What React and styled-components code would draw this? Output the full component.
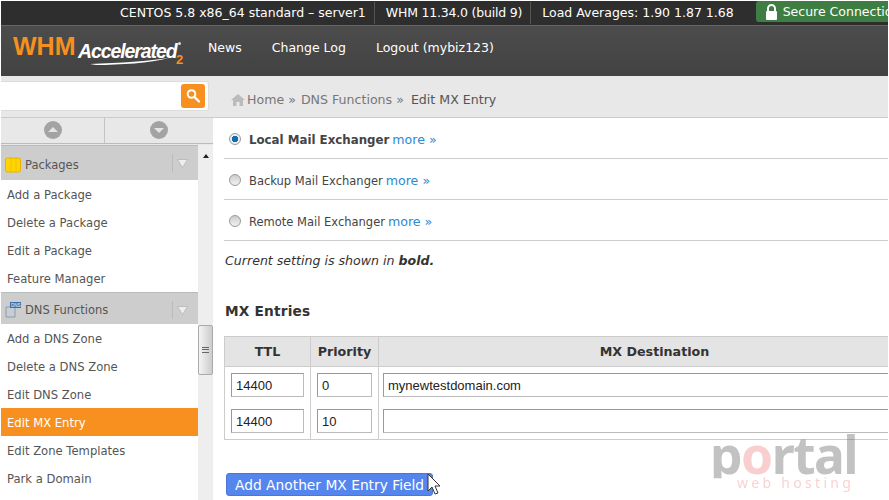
import React from 'react';
import styled, { createGlobalStyle } from 'styled-components';

const Global = createGlobalStyle`
  html, body { margin: 0; padding: 0; background: #fff; }
  * { box-sizing: border-box; }
`;
const Page = styled.div`
  position: relative; width: 889px; height: 500px; overflow: hidden; background: #fff;
  display: flex; flex-direction: column; padding: 1px 1px 0;
  font-family: "DejaVu Sans", Verdana, sans-serif; color: #333;
`;
const TopBar = styled.div`
  height: 25px; flex: none; background: #2e2e2e; border-bottom: 1px solid #666; overflow: hidden;
  display: flex; align-items: center; padding-left: 119px; color: #fff; font-size: 12.5px; white-space: nowrap;
`;
const TopItem = styled.span`
  padding-right: 8px; margin-right: 11px; border-right: 1px solid #555; line-height: 22px;
  letter-spacing: ${p => p.$tight ? '-.2px' : '0'};
`;
const TopLast = styled.span`
  line-height: 22px;
`;
const Secure = styled.div`
  display: flex; align-items: center; gap: 5px; height: 21px; margin: -3px 0 0 22px; padding-left: 9px; flex: none; width: 140px;
  background: #3e7e43; border-radius: 3px 0 0 3px; overflow: hidden;
`;
const Lock = styled.svg`
  flex: none;
`;
const SecureText = styled.span`
  flex: none;
`;
const Header = styled.div`
  height: 50px; flex: none; background: linear-gradient(#4c4c4c, #424242);
  display: flex; align-items: center;
`;
const Logo = styled.div`
  position: relative; width: 207px; height: 50px; flex: none;
`;
const Whm = styled.span`
  position: absolute; left: 12px; top: 8px; font: bold 25px/25px "Liberation Sans", Arial, sans-serif; color: #f7901e;
`;
const Acc = styled.span`
  position: absolute; left: 77px; top: 15px; font: italic bold 19.5px/20px "Liberation Sans", Arial, sans-serif; color: #fff; letter-spacing: -1.1px;
`;
const Two = styled.span`
  position: absolute; left: 175px; top: 27px; font: bold 13px/13px "Liberation Sans", Arial, sans-serif; color: #f7901e;
`;
const Reg = styled.i`
  position: absolute; left: 177px; top: 16px; width: 3px; height: 3px; border-radius: 50%; background: #ddd;
`;
const Swoosh = styled.svg`
  position: absolute; left: 89px; top: 32px;
`;
const Nav = styled.nav`
  display: flex; gap: 30px; font-size: 12.5px; color: #fff; margin-top: -7px;
`;
const Body = styled.div`
  flex: 1; display: flex; min-height: 0; overflow: hidden;
`;
const Side = styled.aside`
  width: 212px; flex: none; display: flex; flex-direction: column; background: #fff;
`;
const SearchBand = styled.div`
  height: 42px; flex: none; background: #e8e8e8; border-bottom: 1px solid #ccc; padding: 5px 4px 5px 0;
`;
const SearchBox = styled.div`
  height: 30px; background: #fff; border: 1px solid #dcdcdc; border-left: none; border-radius: 0 3px 3px 0;
  display: flex; justify-content: flex-end; align-items: center; padding-right: 3px;
`;
const SearchBtn = styled.div`
  width: 24px; height: 24px; background: #f7901e; border-radius: 3px; display: flex; align-items: center; justify-content: center;
`;
const ArrowRow = styled.div`
  height: 26px; flex: none; display: flex; background: #e8e8e8; border-bottom: 1px solid #bbb;
`;
const ArrowCell = styled.div`
  flex: ${p => p.$w ? `0 0 ${p.$w}px` : 1}; display: flex; align-items: center; justify-content: center; margin-top: -1px;
  & + & { border-left: 1px solid #c4c4c4; }
`;
const SideScroll = styled.div`
  flex: 1; display: flex; min-height: 0; padding-top: 1px; background: #e8e8e8;
`;
const List = styled.div`
  width: 197px; flex: none; background: #fff;
`;
const GroupHead = styled.div`
  height: ${p => p.$h}px; background: #cdcdcd; border-top: 1px solid #bbb; display: flex; align-items: center;
  padding: ${p => p.$pt}px 0 0 4px; font-size: 11.5px; color: #555; gap: 4px; position: relative;
`;
const Chevron = styled.div`
  position: absolute; right: 0; top: 8px; width: 26px; height: 18px; padding-right: 6px; border-left: 1px solid #bbb;
  display: flex; align-items: center; justify-content: center;
`;
const Item = styled.div`
  height: 28px; padding: 2px 0 0 6px; display: flex; align-items: center; font-size: 11.6px;
  color: ${p => p.$active ? '#fff' : '#555'}; background: ${p => p.$active ? '#f7901e' : '#fff'};
`;
const Track = styled.div`
  width: 15px; flex: none; background: #eee; position: relative;
`;
const Thumb = styled.div`
  position: absolute; left: 0; top: 180px; width: 15px; height: 50px; border: 1px solid #aaa; border-radius: 2px;
  background: linear-gradient(90deg, #f4f4f4, #ccc); display: flex; align-items: center; justify-content: center;
`;
const Grip = styled.div`
  width: 7px; height: 6px; border-top: 1px solid #666; border-bottom: 1px solid #666; position: relative;
  &::after { content: ""; position: absolute; left: 0; right: 0; top: 1px; height: 1px; background: #666; }
`;
const UpArrow = styled.div`
  position: absolute; left: 5px; top: 9px; width: 0; height: 0; border: 3.5px solid transparent; border-top: none; border-bottom: 4px solid #222;
`;
const Main = styled.main`
  flex: 1; min-width: 0; display: flex; flex-direction: column;
`;
const Crumbs = styled.div`
  height: 42px; flex: none; background: #e8e8e8; border-bottom: 1px solid #ccc; display: flex; align-items: center;
  padding: 6px 0 0 18px; font-size: 12.6px; color: #777; gap: 1px; white-space: nowrap;
`;
const HomeIcon = styled.svg`
  margin-right: 1px; flex: none;
`;
const CrumbNow = styled.span`
  color: #555; margin-left: 2px;
`;
const Content = styled.div`
  flex: 1; padding: 0 0 0 11px; min-height: 0;
`;
const RadioRow = styled.div`
  height: 41px; border-bottom: 1px solid #ccc; display: flex; align-items: center; padding: 3px 0 0 5px; color: #444; white-space: nowrap;
  font-size: ${p => p.$bold ? '11.8px' : '11.5px'};
  font-weight: ${p => p.$bold ? 'bold' : 'normal'};
`;
const Radio = styled.span`
  width: 12px; height: 12px; border-radius: 50%; border: 1px solid #999; margin-right: 8px; flex: none; position: relative; top: -1px;
  background: ${p => p.$on ? 'radial-gradient(circle, #0d6fb0 0 3px, #eee 3.5px)' : 'linear-gradient(#ccc, #f2f2f2)'};
`;
const Label = styled.span``;
const More = styled.a`
  color: #2a8ad4; font-weight: normal; font-size: 12.6px; margin-left: 3px;
`;
const Note = styled.p`
  margin: 12px 0 0 1px; font-size: 12.6px; font-style: italic; color: #333;
  b { font-weight: bold; }
`;
const H2 = styled.h2`
  margin: 34px 0 0 1px; font-size: 13.7px; font-weight: 600; color: #333; line-height: 18px; letter-spacing: .2px;
`;
const Table = styled.div`
  margin-top: 16px; width: 707px; border: 1px solid #ccc; border-right: none; display: grid; grid-template-columns: 86px 68px 552px; height: 104px;
  grid-template-rows: 30px 36px 36px;
`;
const Th = styled.div`
  background: #e4e4e4; border-bottom: 1px solid #ccc; border-right: 1px solid #ccc; display: flex; align-items: center; justify-content: center;
  font-size: 12.7px; font-weight: bold; color: #333;
`;
const Td = styled.div`
  border-right: 1px solid #ccc; padding: 6px 6px 0 ${p => p.$pl}px;
`;
const Input = styled.input`
  display: block; height: 24px; width: ${p => p.$w}px; border: 1px solid #bbb; border-top-color: #999; border-left-color: #999; padding: 1px 4px 0; outline: none;
  font: 13px "Liberation Sans", Arial, sans-serif; color: #222; background: #fff;
`;
const Btn = styled.button`
  display: block; margin: 33px 0 0 2px; width: 207px; height: 23px; border: 1px solid #4a78d6; border-radius: 3px; background: #5586ee; color: #fff;
  font: 13.8px "DejaVu Sans", Verdana, sans-serif; padding: 1px 0 0 8px; text-align: left; white-space: nowrap;
`;
const Cursor = styled.svg`
  position: absolute; left: 427px; top: 473px;
`;
const Water = styled.div`
  position: absolute; left: 710px; top: 430px; width: 160px; pointer-events: none; filter: blur(.5px);
`;
const WaterBig = styled.div`
  font: bold 50px/46px "Noto Sans", sans-serif; color: rgba(110,110,110,.42); letter-spacing: -1.5px; height: 46px; overflow: hidden;
  transform: scale(1.03, 1.05); transform-origin: 0 0; white-space: nowrap;
  span { color: rgba(235,120,120,.36); }
`;
const WaterSmall = styled.div`
  font: 14px/14px "Noto Sans", sans-serif; color: rgba(240,110,110,.32); letter-spacing: 3.3px; margin-top: 0; padding-left: 27px; white-space: nowrap;
`;

const circleBtn = (up) => (
  <svg width="18" height="18" viewBox="0 0 18 18">
    <circle cx="9" cy="9" r="9" fill="#a3a3a3" />
    <path d={up ? 'M4 11 L9 6 L14 11 Z' : 'M4 7 L9 12 L14 7 Z'} fill="#e4e4e4" />
  </svg>
);
const chev = (
  <svg width="11" height="9" viewBox="0 0 11 9"><path d="M.5 .5 H10.5 L5.5 8.5 Z" fill="#eee" stroke="#aaa" strokeWidth=".6" /></svg>
);

export default function App() {
  return (
    <Page>
      <Global />
      <TopBar>
        <TopItem>CENTOS 5.8 x86_64 standard – server1</TopItem>
        <TopItem $tight>WHM 11.34.0 (build 9)</TopItem>
        <TopLast>Load Averages: 1.90 1.87 1.68</TopLast>
        <Secure>
          <Lock width="13" height="16" viewBox="0 0 13 16"><path d="M3 8 V4.5 a3.5 3.5 0 0 1 7 0 V8" fill="none" stroke="#fff" strokeWidth="2" /><rect x="1" y="7" width="11" height="9" rx="1" fill="#fff" /></Lock>
          <SecureText>Secure Connection</SecureText>
        </Secure>
      </TopBar>
      <Header>
        <Logo>
          <Whm>WHM</Whm>
          <Acc>Accelerated</Acc>
          <Reg />
          <Two>2</Two>
          <Swoosh width="80" height="7" viewBox="0 0 80 7"><path d="M0 6 C30 5 60 3 79 0 C60 5 30 7 6 7 Z" fill="#fff" /></Swoosh>
        </Logo>
        <Nav><span>News</span><span>Change Log</span><span>Logout (mybiz123)</span></Nav>
      </Header>
      <Body>
        <Side>
          <SearchBand>
            <SearchBox>
              <SearchBtn>
                <svg width="16" height="16" viewBox="0 0 16 16"><circle cx="6.5" cy="6" r="3.8" fill="none" stroke="#fff" strokeWidth="2" /><path d="M9.5 9 L14 13.5" stroke="#fff" strokeWidth="2.4" strokeLinecap="round" /></svg>
              </SearchBtn>
            </SearchBox>
          </SearchBand>
          <ArrowRow>
            <ArrowCell $w={103}>{circleBtn(true)}</ArrowCell>
            <ArrowCell>{circleBtn(false)}</ArrowCell>
          </ArrowRow>
          <SideScroll>
            <List>
              <GroupHead $h={35} $pt={4}>
                <svg width="16" height="16" viewBox="0 0 16 16"><rect x="0.5" y="1" width="15" height="14" rx="2" fill="#ffd400" stroke="#e0b400" /><path d="M6 1 V15 M11 1 V15" stroke="#f2c200" /></svg>
                Packages
                <Chevron>{chev}</Chevron>
              </GroupHead>
              <Item>Add a Package</Item>
              <Item>Delete a Package</Item>
              <Item>Edit a Package</Item>
              <Item>Feature Manager</Item>
              <GroupHead $h={32} $pt={2}>
                <svg width="16" height="16" viewBox="0 0 16 16"><path d="M1 5 H10 V15 H1 Z" fill="#c5ced6" stroke="#8f9aa5" /><rect x="5" y="0" width="11" height="6" fill="#3d6ea8" /><text x="6" y="5" fontSize="4.5" fill="#fff" fontFamily="Liberation Sans">DNS</text></svg>
                DNS Functions
                <Chevron>{chev}</Chevron>
              </GroupHead>
              <Item>Add a DNS Zone</Item>
              <Item>Delete a DNS Zone</Item>
              <Item>Edit DNS Zone</Item>
              <Item $active>Edit MX Entry</Item>
              <Item>Edit Zone Templates</Item>
              <Item>Park a Domain</Item>
            </List>
            <Track>
              <UpArrow />
              <Thumb><Grip /></Thumb>
            </Track>
          </SideScroll>
        </Side>
        <Main>
          <Crumbs>
            <HomeIcon width="14" height="12" viewBox="0 0 14 12"><path d="M7 0 L14 6 H12 V12 H8.5 V8 H5.5 V12 H2 V6 H0 Z" fill="#bbb" /></HomeIcon>
            <span>Home »</span><span>&nbsp;DNS Functions »</span><CrumbNow>&nbsp;Edit MX Entry</CrumbNow>
          </Crumbs>
          <Content>
            <RadioRow $bold><Radio $on /><Label>Local Mail Exchanger<More>more »</More></Label></RadioRow>
            <RadioRow><Radio /><Label>Backup Mail Exchanger<More>more »</More></Label></RadioRow>
            <RadioRow><Radio /><Label>Remote Mail Exchanger<More>more »</More></Label></RadioRow>
            <Note>Current setting is shown in <b>bold.</b></Note>
            <H2>MX Entries</H2>
            <Table>
              <Th>TTL</Th><Th>Priority</Th><Th>MX Destination</Th>
              <Td $pl={6}><Input $w={73} defaultValue="14400" readOnly /></Td>
              <Td $pl={6}><Input $w={55} defaultValue="0" readOnly /></Td>
              <Td $pl={4}><Input $w={530} defaultValue="mynewtestdomain.com" readOnly /></Td>
              <Td $pl={6}><Input $w={73} defaultValue="14400" readOnly /></Td>
              <Td $pl={6}><Input $w={55} defaultValue="10" readOnly /></Td>
              <Td $pl={4}><Input $w={530} readOnly /></Td>
            </Table>
            <Btn>Add Another MX Entry Field</Btn>
          </Content>
        </Main>
      </Body>
      <Water>
        <WaterBig>p<span>o</span>rtal</WaterBig>
        <WaterSmall>web hosting</WaterSmall>
      </Water>
      <Cursor width="14" height="23" viewBox="0 0 14 23">
        <path d="M1 1 V18 L5 14 L8 21 L11 20 L8 13 H13 Z" fill="#fff" stroke="#333" strokeWidth="1" />
      </Cursor>
    </Page>
  );
}
